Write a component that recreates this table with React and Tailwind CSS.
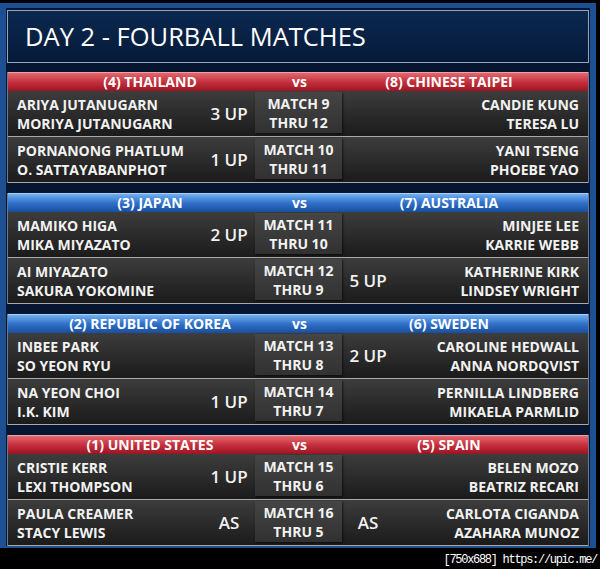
import React from 'react';

const groups = [
    {
        color: 'red',
        left: '(4) THAILAND',
        right: '(8) CHINESE TAIPEI',
        matches: [
            { a: ['ARIYA JUTANUGARN', 'MORIYA JUTANUGARN'], b: ['CANDIE KUNG', 'TERESA LU'], match: 'MATCH 9', thru: 'THRU 12', ls: '3 UP', rs: '' },
            { a: ['PORNANONG PHATLUM', 'O. SATTAYABANPHOT'], b: ['YANI TSENG', 'PHOEBE YAO'], match: 'MATCH 10', thru: 'THRU 11', ls: '1 UP', rs: '' },
        ],
    },
    {
        color: 'blue',
        left: '(3) JAPAN',
        right: '(7) AUSTRALIA',
        matches: [
            { a: ['MAMIKO HIGA', 'MIKA MIYAZATO'], b: ['MINJEE LEE', 'KARRIE WEBB'], match: 'MATCH 11', thru: 'THRU 10', ls: '2 UP', rs: '' },
            { a: ['AI MIYAZATO', 'SAKURA YOKOMINE'], b: ['KATHERINE KIRK', 'LINDSEY WRIGHT'], match: 'MATCH 12', thru: 'THRU 9', ls: '', rs: '5 UP' },
        ],
    },
    {
        color: 'blue',
        left: '(2) REPUBLIC OF KOREA',
        right: '(6) SWEDEN',
        matches: [
            { a: ['INBEE PARK', 'SO YEON RYU'], b: ['CAROLINE HEDWALL', 'ANNA NORDQVIST'], match: 'MATCH 13', thru: 'THRU 8', ls: '', rs: '2 UP' },
            { a: ['NA YEON CHOI', 'I.K. KIM'], b: ['PERNILLA LINDBERG', 'MIKAELA PARMLID'], match: 'MATCH 14', thru: 'THRU 7', ls: '1 UP', rs: '' },
        ],
    },
    {
        color: 'red',
        left: '(1) UNITED STATES',
        right: '(5) SPAIN',
        matches: [
            { a: ['CRISTIE KERR', 'LEXI THOMPSON'], b: ['BELEN MOZO', 'BEATRIZ RECARI'], match: 'MATCH 15', thru: 'THRU 6', ls: '1 UP', rs: '' },
            { a: ['PAULA CREAMER', 'STACY LEWIS'], b: ['CARLOTA CIGANDA', 'AZAHARA MUNOZ'], match: 'MATCH 16', thru: 'THRU 5', ls: 'AS', rs: 'AS' },
        ],
    },
];

const MatchRow = ({ m }) => (
    <div className="flex h-[46px] border-b border-[#a9a9a9] bg-gradient-to-b from-[#3d3d3d] to-[#1b1b1b] text-[14px] font-bold leading-[19px] text-[#f2f2f2]">
        <div className="flex w-[198px] flex-col justify-center pl-[9px]">
            <span>{m.a[0]}</span>
            <span>{m.a[1]}</span>
        </div>
        <div className="flex w-[46px] items-center justify-center text-[17px] font-semibold">{m.ls}</div>
        <div className="mx-[3px] mt-px mb-[3px] flex w-[87px] flex-col items-center justify-center bg-gradient-to-b from-[#454545] to-[#313131] shadow-[1px_1px_2px_rgba(0,0,0,0.6)]">
            <span>{m.match}</span>
            <span>{m.thru}</span>
        </div>
        <div className="flex w-[46px] items-center justify-center text-[17px] font-semibold">{m.rs}</div>
        <div className="flex flex-1 flex-col items-end justify-center pr-[9px]">
            <span>{m.b[0]}</span>
            <span>{m.b[1]}</span>
        </div>
    </div>
);

const Group = ({ g }) => {
    const head = g.color === 'red'
        ? 'from-[#e2676f] via-[#c52f3d] to-[#9c1422] border-t-[#f0a0a6]'
        : 'from-[#72afef] via-[#2f71c9] to-[#1a4e9d] border-t-[#a9d0f6]';
    return (
        <div className="border-x border-[#6f7b8c]">
            <div className={`grid h-[19px] grid-cols-[284px_1fr_284px] items-center border-t bg-gradient-to-b ${head} text-[14px] font-bold leading-none text-white`}>
                <span className="text-center">{g.left}</span>
                <span className="text-center">vs</span>
                <span className="text-center">{g.right}</span>
            </div>
            {g.matches.map((m, i) => (
                <MatchRow key={i} m={m} />
            ))}
        </div>
    );
};

export default function App() {
    return (
        <div className="h-[569px] w-[600px] overflow-hidden bg-black font-['Open_Sans',sans-serif]">
            <div className="mt-[3px] w-[596px] border-x-[6px] border-t-[5px] border-b-[2px] border-[#1d4f93] bg-[#061631] px-px pt-[2px]">
                {/* Title */}
                <div className="flex h-[53px] items-center border border-[#8fa5c4] bg-gradient-to-b from-[#0c2850] to-[#061a38] pl-[17px]">
                    <h1 className="text-[25.5px] leading-none font-normal text-white">DAY 2 - FOURBALL MATCHES</h1>
                </div>

                <div className="mt-[9px] flex flex-col gap-[10px]">
                    {groups.map((g, i) => (
                        <Group key={i} g={g} />
                    ))}
                </div>
            </div>
            <div className="mt-[3px] pr-[3px] text-right font-['Liberation_Mono',monospace] text-[12px] tracking-[-1.3px] text-white">
                [750x688] https://upic.me/
            </div>
        </div>
    );
}
